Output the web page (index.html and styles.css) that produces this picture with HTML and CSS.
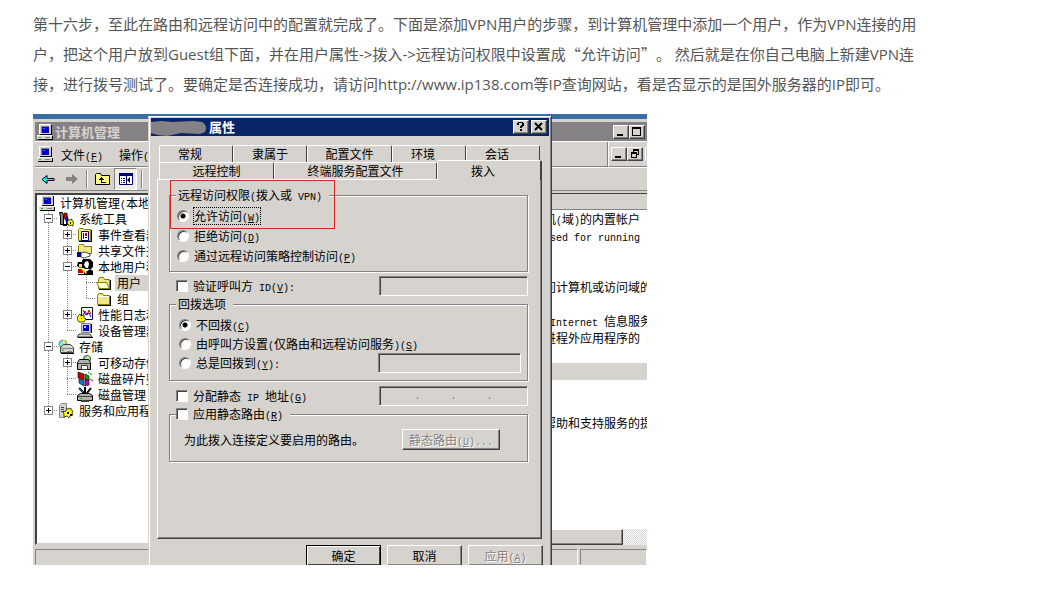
FILE: index.html
```html
<!DOCTYPE html>
<html lang="zh-CN">
<head>
  <meta charset="UTF-8" />
  <title>VPN 用户设置</title>
  <link rel="stylesheet" href="styles.css">
</head>
<body>
  <!-- Shared icons -->
  <svg class="sprite" aria-hidden="true">
    <symbol id="i-computer" viewBox="0 0 16 16">
      <path fill="#d6d3ce" d="M2 0h12v10H2zM0 11h15v4H0z"/>
      <path fill="#fff" d="M2 0h11v1H3v9H2zM0 11h15v1H0z"/>
      <path fill="#000" d="M14 1h1v10h-1zM3 10h11v1H3zM15 12h1v4H1v-1h14z"/>
      <path fill="#848284" d="M4 2h8v1H5v6H4z"/>
      <path fill="#0000c6" d="M5 3h7v6H5z"/>
      <path fill="#4a6bff" d="M6 4h2v1H6z"/>
      <path fill="#848284" d="M8 13h5v1H8z"/>
      <path fill="#00c600" d="M2 13h2v1H2z"/>
    </symbol>
    <symbol id="i-folder" viewBox="0 0 16 16">
      <path fill="#efe784" stroke="#848200" d="M1.500 13.500v-9l1-2h4l1 2h6v9z"/>
      <path fill="#fff" d="M2 5h11v1H2z"/>
      <path fill="#000" d="M14 5h1v10H2v-1h12z"/>
    </symbol>
    <symbol id="i-folder-open" viewBox="0 0 16 16">
      <path fill="#efe784" stroke="#848200" d="M2.500 13.500v-9l1-2h4l1 2h5v9z"/>
      <path fill="#ffffce" stroke="#848200" d="M.5 7.500h10l3 6h-10z"/>
      <path fill="#000" d="M14 5h1v10H3v-1h11z"/>
    </symbol>
    <symbol id="i-folder-up" viewBox="0 0 16 16">
      <path fill="#ffff84" stroke="#000" d="M.5 13.500v-10l1-1h4l1 2h8v9z"/>
      <path fill="#000" d="M6 6h1v1h1v1h1v1H7v2h4v1H6V9H4V8h1V7h1z"/>
    </symbol>
    <symbol id="i-tools" viewBox="0 0 16 16">
      <path fill="#848284" stroke="#000" d="M1.500 1.500h3l1 3v9h-3v-8z"/>
      <path fill="#00c6c6" d="M3 5h1v8H3z"/>
      <path fill="#c60000" stroke="#000" stroke-width=".5" d="M6 2h3l1 6-2 2-2-3z"/>
      <path fill="#0000a5" d="M8 6h2v8H8z"/>
      <path fill="#ffff00" stroke="#000" stroke-width=".7" d="M10 8l2 1 2-1v2l2 1-1 2v2l-2-1-2 1-1-2-1-1 1-2z"/>
      <path fill="#000" d="M12 11h1v2h-1zM5 13h4v2H5z"/>
    </symbol>
    <symbol id="i-event" viewBox="0 0 16 16">
      <path fill="#efe784" stroke="#848200" d="M1.500 13.500v-11l1-1h4l1 1h6v11z"/>
      <path fill="#fff" stroke="#00007b" d="M4.500 4.500h7v9h-7z"/>
      <path fill="#c60000" d="M8 6h2v3H8z"/>
      <path fill="#0000c6" d="M6 6h1v6H6zM8 10h2v1H8z"/>
      <path fill="#000" d="M14 3h1v12H2v-1h12z"/>
    </symbol>
    <symbol id="i-share" viewBox="0 0 16 16">
      <path fill="#efe784" stroke="#848200" d="M1.500 10.500v-8l1-1h4l1 2h7v7z"/>
      <path fill="#0000a5" d="M0 9h4v5H0z"/>
      <path fill="#fff" stroke="#000" stroke-width=".7" d="M4 10l4-1 5 2v2l-6 2-3-1z"/>
    </symbol>
    <symbol id="i-users" viewBox="0 0 16 16">
      <path fill="#000" d="M6 0h7l3 3v5l-2 2H8L5 7V2z"/>
      <path fill="#fff" d="M8 3l3-1 1 3-1 4H9L7 6z"/>
      <path fill="#000" d="M1 3h4l2 2v4H3L0 7z"/>
      <path fill="#ffce9c" d="M2 5h3v3H2z"/>
      <path fill="#c60000" d="M1 10h5v4H1z"/>
      <path fill="#000" d="M6 10l3 3 4-3 3 2v4H1v-1h6z"/>
      <path fill="#ffff00" d="M4 8l6 6-1 1-6-6z"/>
    </symbol>
    <symbol id="i-perf" viewBox="0 0 16 16">
      <path fill="#fff" stroke="#00007b" d="M4.500.5h11v12h-11z"/>
      <path fill="none" stroke="#c60000" d="M6 8l2-4 2 4 2-5 2 4"/>
      <path fill="none" stroke="#0000c6" d="M6 3l3 5 3-2 2 4"/>
      <path fill="#ffff00" stroke="#000" stroke-width=".7" d="M1 9l2-2 1 2 3-1v3l2 1-2 3H2l-2-3z"/>
      <path fill="#000" d="M4 11h1v1H4z"/>
    </symbol>
    <symbol id="i-device" viewBox="0 0 16 16">
      <path fill="#d6d3ce" stroke="#848284" d="M4.500.5h9v9h-9z"/>
      <path fill="#0000c6" d="M6 2h6v6H6z"/>
      <path fill="#9ccfff" d="M7 3h2v2H7z"/>
      <path fill="#d6d3ce" stroke="#000" stroke-width=".7" d="M2 11h11l2 3H0z"/>
      <path fill="#000" d="M14 1h1v9h-1zM1 14h15v1H1z"/>
    </symbol>
    <symbol id="i-storage" viewBox="0 0 16 16">
      <circle cx="5" cy="5" r="4" fill="#84e7c6" stroke="#848284"/>
      <path fill="#ffff00" d="M5 1l3 1-3 3z"/>
      <path fill="#d6d3ce" stroke="#424142" d="M2.500 8.500l3-3h7l3 3v5h-13z"/>
      <path fill="#848284" d="M3 9h12v1H3zM9 12h5v1H9z"/>
      <path fill="#000" d="M3 14h13v1H3z"/>
      <path fill="#00c600" d="M4 11h2v1H4z"/>
    </symbol>
    <symbol id="i-removable" viewBox="0 0 16 16">
      <circle cx="10" cy="4" r="3.500" fill="#84e7c6" stroke="#424142"/>
      <path fill="#ffff00" d="M10 1l3 1-3 2z"/>
      <path fill="#b5b2ad" stroke="#000" d="M.5 7.500l2-3h9l2 3v7H.5z"/>
      <path fill="#424142" d="M1 8h12v1H1z"/>
      <path fill="#fff" stroke="#424142" d="M4.500 10.500h6v4h-6z"/>
    </symbol>
    <symbol id="i-defrag" viewBox="0 0 16 16">
      <path fill="#c60000" stroke="#000" stroke-width=".6" d="M1 1l6 2v6l-6-2z"/>
      <path fill="#0082c6" stroke="#000" stroke-width=".6" d="M2 8l5 2v5l-5-3z"/>
      <path fill="#00a500" stroke="#000" stroke-width=".6" d="M8 3l4 2v4H8z"/>
      <path fill="#c600c6" stroke="#000" stroke-width=".6" d="M8 9h4v5l-4 1z"/>
      <path fill="none" stroke="#00a500" d="M11 1l4 3"/>
      <path fill="none" stroke="#c60000" d="M13 8l3 2"/>
    </symbol>
    <symbol id="i-diskmgr" viewBox="0 0 16 16">
      <path fill="none" stroke="#000" stroke-width="2" d="M2 1l5 5M8 0v6M14 1l-4 5"/>
      <path fill="none" stroke="#0082c6" d="M2 1l4 4"/>
      <path fill="#b5b2ad" stroke="#000" d="M.5 8.500l3-2h9l3 2v5H.5z"/>
      <path fill="#424142" d="M1 9h14v1H1zM4 13h8v2H4z"/>
      <path fill="#00c600" d="M3 11h2v1H3z"/>
    </symbol>
    <symbol id="i-services" viewBox="0 0 16 16">
      <path fill="#d6d3ce" stroke="#848284" d="M1.500 2.500l2-2h5v12l-2 2h-5z"/>
      <path fill="#424142" d="M3 4h3v1H3zM3 6h3v1H3zM3 8h3v1H3z"/>
      <path fill="#ffff00" stroke="#000" stroke-width=".7" d="M9 5l2 1 2-1v2l2 1-1 2 1 2-3 1-1 2-2-2-3 1V11L5 9l3-1z"/>
      <path fill="#000" d="M9 9h2v2H9zM12 11h2v2h-2z"/>
    </symbol>
    <symbol id="i-pane" viewBox="0 0 16 16">
      <path fill="#fff" stroke="#00007b" d="M1.500 2.500h13v11h-13z"/>
      <path fill="#00007b" d="M1 2h14v3H1zM8 5h1v9H8zM3 7h1v1H3zM5 7h2v1H5zM3 9h1v1H3zM5 9h2v1H5zM3 11h1v1H3zM5 11h2v1H5z"/>
      <path fill="#000" d="M12 6v6l-3-3z"/>
    </symbol>
    <symbol id="i-back" viewBox="0 0 16 16">
      <path fill="#00ffff" stroke="#000" d="M2 8.500l5-4v3h7v2H7v3z"/>
    </symbol>
    <symbol id="i-forward" viewBox="0 0 16 16">
      <path fill="#848284" d="M15 8L9 3v3H3v4h6v3z"/>
    </symbol>
    <symbol id="i-min" viewBox="0 0 12 12"><path fill="#000" d="M3 8h6v2H3z"/></symbol>
    <symbol id="i-max" viewBox="0 0 12 12"><path fill="#000" d="M2 1h9v9H2zM3 3v6h7V3z" fill-rule="evenodd"/></symbol>
    <symbol id="i-restore" viewBox="0 0 12 12"><path fill="#000" fill-rule="evenodd" d="M5 1h6v6H9v3H3V4h2zM6 3v1h3v2h1V3zM4 6v3h4V6z"/></symbol>
    <symbol id="i-help" viewBox="0 0 12 12"><path fill="#000" d="M4 1h5v1h1v3H9v1H8v1H6V5h1V4h1V2H5v2H3V2h1zM6 8h2v2H6z"/></symbol>
    <symbol id="i-close" viewBox="0 0 12 12"><path fill="none" stroke="#000" stroke-width="2" d="M3 2l7 7M10 2l-7 7"/></symbol>
  </svg>

  <article class="post">
    <p>第十六步，至此在路由和远程访问中的配置就完成了。下面是添加VPN用户的步骤，到计算机管理中添加一个用户，作为VPN连接的用户，把这个用户放到Guest组下面，并在用户属性-&gt;拨入-&gt;远程访问权限中设置成<span class="zh">“</span>允许访问<span class="zh">”</span>。 然后就是在你自己电脑上新建VPN连接，进行拨号测试了。要确定是否连接成功，请访问http://www.ip138.com等IP查询网站，看是否显示的是国外服务器的IP即可。</p>

    <div class="desktop">
      <!-- Computer Management -->
      <section class="window">
        <header class="window-title">
          <svg class="icon"><use href="#i-computer"/></svg>
          <h2>计算机管理</h2>
          <div class="caption-buttons">
            <button class="cap" aria-label="最小化"><svg><use href="#i-min"/></svg></button>
            <button class="cap" aria-label="最大化"><svg><use href="#i-max"/></svg></button>
          </div>
        </header>
        <div class="menubar">
          <nav class="menus">
            <svg class="icon"><use href="#i-computer"/></svg>
            <button class="menu">文件<span class="key">(<u>F</u>)</span></button>
            <button class="menu">操作<span class="key">(<u>A</u>)</span></button>
          </nav>
          <div class="mdi-buttons">
            <button class="cap" aria-label="最小化"><svg><use href="#i-min"/></svg></button>
            <button class="cap" aria-label="还原"><svg><use href="#i-restore"/></svg></button>
            <span class="cap-edge"></span>
          </div>
        </div>
        <div class="toolbar">
          <button class="tool" aria-label="后退"><svg class="icon"><use href="#i-back"/></svg></button>
          <button class="tool" aria-label="前进"><svg class="icon"><use href="#i-forward"/></svg></button>
          <span class="sep"></span>
          <button class="tool" aria-label="向上"><svg class="icon"><use href="#i-folder-up"/></svg></button>
          <button class="tool pressed" aria-label="显示控制台树"><svg class="icon"><use href="#i-pane"/></svg></button>
          <span class="sep"></span>
        </div>
        <div class="panes">
          <div class="tree">
            <div class="node root"><svg class="icon"><use href="#i-computer"/></svg><span>计算机管理<span class="key">(</span>本地</span></div>
            <ul>
              <li>
                <div class="node"><span class="branch"><b class="box"></b></span><svg class="icon"><use href="#i-tools"/></svg>系统工具</div>
                <ul>
                  <li><div class="node"><span class="branch"><b class="box plus"></b></span><svg class="icon"><use href="#i-event"/></svg>事件查看器</div></li>
                  <li><div class="node"><span class="branch"><b class="box plus"></b></span><svg class="icon"><use href="#i-share"/></svg>共享文件夹</div></li>
                  <li>
                    <div class="node"><span class="branch"><b class="box"></b></span><svg class="icon"><use href="#i-users"/></svg>本地用户和</div>
                    <ul>
                      <li><div class="node"><span class="branch"></span><svg class="icon"><use href="#i-folder-open"/></svg><span class="picked">用户</span></div></li>
                      <li><div class="node last"><span class="branch"></span><svg class="icon"><use href="#i-folder"/></svg>组</div></li>
                    </ul>
                  </li>
                  <li><div class="node"><span class="branch"><b class="box plus"></b></span><svg class="icon"><use href="#i-perf"/></svg>性能日志和</div></li>
                  <li><div class="node last"><span class="branch"></span><svg class="icon"><use href="#i-device"/></svg>设备管理器</div></li>
                </ul>
              </li>
              <li>
                <div class="node"><span class="branch"><b class="box"></b></span><svg class="icon"><use href="#i-storage"/></svg>存储</div>
                <ul>
                  <li><div class="node"><span class="branch"><b class="box plus"></b></span><svg class="icon"><use href="#i-removable"/></svg>可移动存储</div></li>
                  <li><div class="node"><span class="branch"></span><svg class="icon"><use href="#i-defrag"/></svg>磁盘碎片整</div></li>
                  <li><div class="node last"><span class="branch"></span><svg class="icon"><use href="#i-diskmgr"/></svg>磁盘管理</div></li>
                </ul>
              </li>
              <li><div class="node last"><span class="branch"><b class="box plus"></b></span><svg class="icon"><use href="#i-services"/></svg>服务和应用程</div></li>
            </ul>
          </div>
          <div class="list">
            <table>
              <thead><tr><th aria-label="描述"></th></tr></thead>
              <tbody>
                <tr><td>机<span class="key">(</span>域<span class="key">)</span>的内置帐户</td></tr>
                <tr><td><span class="key">used for running</span></td></tr>
                <tr><td></td></tr>
                <tr><td></td></tr>
                <tr><td>问计算机或访问域的</td></tr>
                <tr><td></td></tr>
                <tr><td><span class="key"> Internet </span>信息服务</td></tr>
                <tr><td>进程外应用程序的<span class="key"> I</span></td></tr>
                <tr><td></td></tr>
                <tr class="current"><td></td></tr>
                <tr><td></td></tr>
                <tr><td></td></tr>
                <tr><td>帮助和支持服务的提</td></tr>
              </tbody>
            </table>
            <div class="scrollbar"><span class="thumb"></span></div>
          </div>
        </div>
        <footer class="status"><span></span><span></span><span></span></footer>
      </section>

      <!-- User properties -->
      <section class="dialog">
        <header class="dialog-title">
          <svg class="smudge" viewBox="0 0 56 18"><path fill="#848284" d="M0 4l10-1 12 1 20-1 9 1q4 2 4 6t-3 5l-4 1-18-1-14 3-9-1-7-2z"/></svg>
          <h2>属性</h2>
          <div class="caption-buttons">
            <button class="cap" aria-label="帮助"><svg><use href="#i-help"/></svg></button>
            <button class="cap" aria-label="关闭"><svg><use href="#i-close"/></svg></button>
          </div>
        </header>
        <div class="tabs" role="tablist">
          <div class="tab-row back">
            <button class="tab short" role="tab">常规</button>
            <button class="tab" role="tab">隶属于</button>
            <button class="tab" role="tab">配置文件</button>
            <button class="tab short" role="tab">环境</button>
            <button class="tab short" role="tab">会话</button>
          </div>
          <div class="tab-row front">
            <button class="tab" role="tab">远程控制</button>
            <button class="tab" role="tab">终端服务配置文件</button>
            <button class="tab short active" role="tab" aria-selected="true">拨入</button>
          </div>
        </div>
        <form class="panel">
          <span class="highlight"></span>
          <fieldset class="access">
            <legend>远程访问权限<span class="key">(</span>拨入或<span class="key"> VPN)</span></legend>
            <label class="row"><input type="radio" name="access" checked><span class="focused">允许访问<span class="key">(<u>W</u>)</span></span></label>
            <label class="row"><input type="radio" name="access"><span>拒绝访问<span class="key">(<u>D</u>)</span></span></label>
            <label class="row"><input type="radio" name="access"><span>通过远程访问策略控制访问<span class="key">(<u>P</u>)</span></span></label>
          </fieldset>

          <div class="row split">
            <label class="row"><input type="checkbox"><span>验证呼叫方<span class="key"> ID(<u>V</u>):</span></span></label>
            <input class="field" type="text" aria-label="呼叫方 ID" disabled>
          </div>

          <fieldset class="callback">
            <legend>回拨选项</legend>
            <label class="row"><input type="radio" name="callback" checked><span>不回拨<span class="key">(<u>C</u>)</span></span></label>
            <label class="row"><input type="radio" name="callback"><span>由呼叫方设置<span class="key">(</span>仅路由和远程访问服务<span class="key">)(<u>S</u>)</span></span></label>
            <div class="row split">
              <label class="row"><input type="radio" name="callback"><span>总是回拨到<span class="key">(<u>Y</u>):</span></span></label>
              <input class="field" type="text" aria-label="回拨号码" disabled>
            </div>
          </fieldset>

          <div class="row split ip">
            <label class="row"><input type="checkbox"><span>分配静态<span class="key"> IP </span>地址<span class="key">(<u>G</u>)</span></span></label>
            <input class="field dots" type="text" aria-label="IP 地址" value=".     .     ." disabled>
          </div>

          <fieldset class="routes">
            <legend><label class="row"><input type="checkbox"><span>应用静态路由<span class="key">(<u>R</u>)</span></span></label></legend>
            <div class="row split">
              <span>为此拨入连接定义要启用的路由。</span>
              <button type="button" class="btn" disabled>静态路由<span class="key">(<u>U</u>)...</span></button>
            </div>
          </fieldset>
        </form>
        <footer class="actions">
          <button class="btn default">确定</button>
          <button class="btn">取消</button>
          <button class="btn" disabled>应用<span class="key">(<u>A</u>)</span></button>
        </footer>
      </section>
    </div>
  </article>
</body>
</html>
```
FILE: styles.css
```css
* {
  box-sizing: border-box;
}
body {
  margin: 0;
  background: #fff;
  color: #555;
  font-family: "Open Sans", "Noto Sans CJK SC", sans-serif;
  text-spacing-trim: space-all;
}
.sprite {
  display: none;
}
.post {
  max-width: 966px;
  padding: 9px 33px;
}
.post p {
  margin: 0 0 15px;
  font-size: 15px;
  line-height: 30px;
}
.zh {
  font-family: "Noto Sans CJK SC", sans-serif;
}

/* Both windows share one grid cell, the dialog sits on top */
.desktop {
  display: grid;
  grid-template-columns: minmax(0, 1fr);
  max-width: 614px;
  overflow: hidden;
  background: #3a6ea5;
  color: #000;
  font: 12px/16px "Noto Sans CJK SC", sans-serif;
}
.window, .dialog {
  grid-area: 1 / 1;
  background: #d6d3ce;
}
.desktop h2 {
  margin: 0;
  font-size: 13px;
  line-height: 18px;
}
.desktop button {
  padding: 0;
  font: inherit;
  color: inherit;
  border: 0;
  background: #d6d3ce;
}
.key {
  font-family: "Liberation Mono", monospace;
  font-size: 10px;
  line-height: 0;
  white-space: pre;
}
.icon {
  flex: none;
  width: 16px;
  height: 16px;
}

/* Caption buttons */
.caption-buttons, .mdi-buttons {
  display: flex;
  margin-left: auto;
}
.desktop .cap {
  width: 16px;
  height: 14px;
  border: 1px solid;
  border-color: #fff #424142 #424142 #fff;
  box-shadow: inset -1px -1px #848284;
}
.cap svg {
  display: block;
  width: 12px;
  height: 12px;
}

/* Computer Management window */
.window {
  display: flex;
  flex-direction: column;
  margin-top: 5px;
  padding: 3px 0 0 2px;
  min-width: 0;
  overflow: hidden;
}
.window-title {
  display: flex;
  align-items: center;
  gap: 2px;
  height: 19px;
  padding: 0 2px;
  background: #848284;
  color: #d6d3ce;
}
.menubar {
  display: flex;
  height: 26px;
  border-top: 1px solid #fff;
}
.menus {
  display: flex;
  flex: 1;
  align-items: center;
  padding-left: 2px;
  border-right: 1px solid #848284;
  border-bottom: 1px solid #848284;
}
.menus .menu {
  margin: 1px 8px 0;
}
.mdi-buttons {
  align-items: center;
  width: 39px;
  padding-left: 2px;
  border-left: 1px solid #fff;
  border-bottom: 1px solid #848284;
}
.cap-edge {
  width: 2px;
  height: 14px;
  margin-left: 2px;
  border-left: 1px solid #fff;
}
.toolbar {
  display: flex;
  align-items: center;
  height: 24px;
  padding-left: 1px;
  border-top: 1px solid #fff;
  border-bottom: 1px solid #848284;
}
.tool {
  display: flex;
  align-items: center;
  justify-content: center;
  width: 23px;
  height: 22px;
}
.desktop .tool.pressed {
  border: 1px solid;
  border-color: #848284 #fff #fff #848284;
  background: #efebe7;
}
.sep {
  width: 2px;
  height: 18px;
  margin: 0 3px 0 4px;
  border-left: 1px solid #848284;
  border-right: 1px solid #fff;
}
.panes {
  display: grid;
  grid-template-columns: 1fr 118px;
  flex: 1;
  margin-top: 2px;
  min-height: 0;
}
.tree {
  padding-left: 2px;
  background: #fff;
  border: 2px solid;
  border-color: #424142 #d6d3ce #d6d3ce #424142;
}
.tree ul {
  margin: 0;
  padding: 0;
  list-style: none;
}
.tree ul ul {
  padding-left: 19px;
  background: repeating-linear-gradient(#848284 0 1px, transparent 1px 2px) 9px 0 / 1px 100% no-repeat;
}
.node {
  display: flex;
  align-items: center;
  gap: 5px;
  height: 16px;
  white-space: nowrap;
}
.branch {
  flex: none;
  width: 19px;
  height: 16px;
  margin-right: -5px;
  padding: 3px 5px;
  background:
    repeating-linear-gradient(#848284 0 1px, transparent 1px 2px) 9px 0 / 1px 100% no-repeat,
    repeating-linear-gradient(90deg, #848284 0 1px, transparent 1px 2px) 9px 7px / 10px 1px no-repeat;
}
.last .branch {
  background-size: 1px 8px, 10px 1px;
}
.box {
  display: block;
  width: 9px;
  height: 9px;
  border: 1px solid #848284;
  background: linear-gradient(#000, #000) center / 5px 1px no-repeat #fff;
}
.box.plus {
  background:
    linear-gradient(#000, #000) center / 5px 1px no-repeat,
    linear-gradient(#000, #000) center / 1px 5px no-repeat #fff;
}
.picked {
  padding: 0 8px 0 2px;
  margin-left: -2px;
  background: #d6d3ce;
}
.list {
  display: flex;
  flex-direction: column;
  min-width: 0;
  overflow: hidden;
  background: #fff;
  border-top: 1px solid #424142;
}
.list table {
  width: 100%;
  table-layout: fixed;
  border-collapse: separate;
  border-spacing: 0;
}
.list th {
  height: 16px;
  padding: 0;
  background: #d6d3ce;
  border-bottom: 1px solid #848284;
}
.list td {
  height: 17px;
  padding: 0 0 0 15px;
  line-height: 17px;
  white-space: nowrap;
}
.list .current td {
  background: #d6d3ce;
}
.scrollbar {
  height: 16px;
  margin-top: auto;
  background: repeating-conic-gradient(#fff 0 25%, #d6d3ce 0 50%) 0 0 / 2px 2px;
}
.thumb {
  display: block;
  width: 80%;
  height: 16px;
  background: #d6d3ce;
  border: 1px solid;
  border-color: #fff #424142 #424142 #fff;
  box-shadow: inset -1px -1px #848284;
}
.status {
  display: grid;
  grid-template-columns: 1fr 73px 67px;
  gap: 2px;
  height: 20px;
  padding-top: 4px;
}
.status span {
  border: 1px solid;
  border-color: #848284 #fff transparent #848284;
}

/* Properties dialog */
.dialog {
  position: relative;
  width: 404px;
  margin: 2px 0 0 115px;
  border-left: 1px solid #d6d3ce;
  border-right: 1px solid #424142;
  box-shadow: inset 1px 1px #fff, inset -1px 0 #848284;
  padding: 2px 2px 0;
}
.dialog-title {
  display: flex;
  align-items: center;
  height: 18px;
  padding-right: 2px;
  background: #0a246a;
  color: #fff;
}
.dialog-title .caption-buttons {
  gap: 2px;
}
.smudge {
  width: 56px;
  height: 18px;
  margin-right: 2px;
}
.tabs {
  margin: 9px 7px 0 8px;
}
.tab-row {
  display: grid;
  height: 17px;
}
.back {
  grid-template-columns: 74fr 74fr 85fr 74fr 74fr;
  padding-right: 2px;
}
.front {
  grid-template-columns: 115fr 163fr 105fr;
}
.desktop .tab {
  height: 17px;
  line-height: 16px;
  border: 1px solid;
  border-color: #fff #424142 transparent #fff;
  border-bottom: 0;
  border-radius: 2px 2px 0 0;
}
.desktop .tab.short {
  padding-right: 12px;
}
.desktop .tab.active {
  position: relative;
  z-index: 1;
  height: 20px;
  margin-top: -2px;
  border-right-width: 2px;
}
.panel {
  position: relative;
  min-height: 360px;
  margin: 0 7px 0 6px;
  padding: 7px 13px 0 11px;
  border: 1px solid;
  border-color: #fff #424142 #424142 #fff;
  box-shadow: inset -1px -1px #848284;
}
.highlight {
  position: absolute;
  top: 0;
  left: 12px;
  z-index: 1;
  width: 165px;
  height: 49px;
  border: 1px solid #d62421;
  pointer-events: none;
}
.row {
  display: flex;
  align-items: center;
  gap: 5px;
  min-height: 16px;
}
.split {
  justify-content: space-between;
}
.panel > .split {
  height: 20px;
  margin-top: 4px;
  padding-left: 7px;
}
.panel > .ip {
  margin-top: 5px;
}
fieldset {
  margin: 0;
  min-width: 0;
  border: 1px solid #848284;
  box-shadow: 1px 1px #fff, inset 1px 1px #fff;
}
legend {
  height: 16px;
  margin-left: -1px;
  padding: 0 7px 0 2px;
  background: #d6d3ce;
}
.access {
  padding: 3px 6px 5px 7px;
}
.access > .row {
  height: 20px;
}
.callback {
  padding: 3px 6px 7px 9px;
}
.callback legend {
  margin-left: -3px;
}
.callback > .row {
  min-height: 19px;
}
.routes {
  padding: 7px 27px 11px 14px;
}
.routes legend {
  margin-left: -8px;
  padding-left: 0;
}
.focused {
  outline: 1px dotted #000;
}
input[type="radio"], input[type="checkbox"] {
  appearance: none;
  flex: none;
  width: 12px;
  height: 12px;
  margin: 0;
  background: #fff;
  border: 1px solid;
  border-color: #848284 #fff #fff #848284;
  box-shadow: inset 1px 1px #424142;
}
input[type="radio"] {
  border-radius: 50%;
}
input[type="radio"]:checked {
  background: radial-gradient(circle, #000 0 2px, #fff 3px);
}
.field {
  width: 149px;
  height: 20px;
  padding: 0 4px;
  background: #d6d3ce;
  border: 1px solid;
  border-color: #848284 #fff #fff #848284;
  box-shadow: inset 1px 1px #424142;
}
.callback .field {
  width: 143px;
}
.dots {
  color: #848284;
  font: 10px "Liberation Mono", monospace;
  text-align: center;
}
.desktop .btn {
  height: 21px;
  border: 1px solid;
  border-color: #fff #424142 #424142 #fff;
  box-shadow: inset -1px -1px #848284;
}
.desktop .btn:disabled {
  color: #848284;
  text-shadow: 1px 1px #fff;
}
.routes .btn {
  width: 98px;
}
.actions {
  display: flex;
  justify-content: flex-end;
  gap: 6px;
  height: 20px;
  margin: 6px 6px 0 0;
  overflow: hidden;
}
.actions .btn {
  width: 75px;
  line-height: 18px;
}
.desktop .btn.default {
  border-color: #000;
  box-shadow: inset 1px 1px #fff, inset -1px -1px #424142;
}
```
